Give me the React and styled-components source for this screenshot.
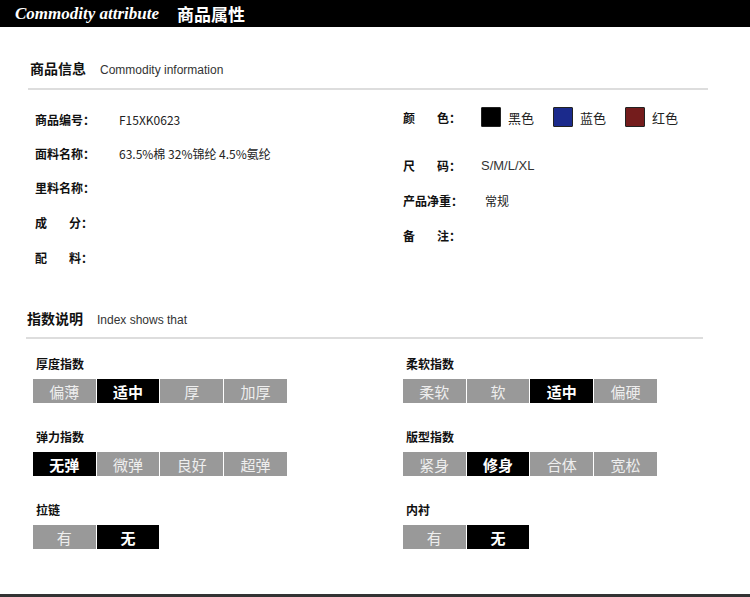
import React from "react";
import styled, { createGlobalStyle } from "styled-components";

const G = createGlobalStyle`
  body { margin: 0; background: #fff; font-family: "Liberation Sans", "Noto Sans CJK SC", sans-serif; }
`;
const Page = styled.div`width: 750px; height: 597px; overflow: hidden; border-bottom: 3px solid #333; box-sizing: border-box;`;
const Header = styled.div`height: 27px; background: #000; display: flex; align-items: center; padding-left: 15px; gap: 18px; color: #fff;`;
const Eng = styled.span`font-family: "Liberation Serif", serif; font-style: italic; font-weight: bold; font-size: 17px;`;
const Cn = styled.span`font-size: 17px; font-weight: bold; font-family: "Noto Sans CJK SC", sans-serif;`;
const SecHead = styled.div`
  margin: ${p => p.$m}; width: ${p => p.$w}px; display: flex; align-items: baseline; gap: 14px;
  padding: 0 0 ${p => p.$pb}px ${p => p.$pl}px; border-bottom: 2px solid #ddd;
`;
const SecTitle = styled.span`font-size: 14px; font-weight: bold; font-family: "Noto Sans CJK SC", sans-serif; color: #111;`;
const SecSub = styled.span`font-size: 12px; color: #333;`;
const Info = styled.div`display: grid; grid-template-columns: 368px 1fr; padding: 12px 0 0 35px; height: 175px;`;
const Col = styled.div`display: flex; flex-direction: column;`;
const Row = styled.div`display: flex; align-items: center; height: ${p => p.$h}px;`;
const Label = styled.span`
  width: ${p => p.$w}px; margin-right: ${p => p.$mr}px; font-size: 12px; font-weight: bold; color: #111;
  font-family: "Noto Sans CJK SC", sans-serif; display: flex; justify-content: space-between;
`;
const Val = styled.span`font-size: 12px; color: #222; font-family: "Noto Sans CJK SC", sans-serif;`;
const Size = styled.span`font-size: 13px; color: #333; font-family: "Liberation Sans", sans-serif;`;
const Swatch = styled.span`width: 20px; height: 20px; background: ${p => p.$c}; border: 1px solid #222; box-sizing: border-box; border-radius: 1px; margin-right: 7px;`;
const SwItem = styled.span`display: flex; align-items: center; margin-right: 19px; font-size: 13px; color: #222; font-family: "Noto Sans CJK SC", sans-serif;`;
const Index = styled.div`display: grid; grid-template-columns: 370px 1fr; padding: 16px 0 0 33px; row-gap: 25px;`;
const Group = styled.div`display: flex; flex-direction: column; gap: 7px;`;
const GLabel = styled.div`font-size: 12px; font-weight: bold; font-family: "Noto Sans CJK SC", sans-serif; color: #111; padding-left: 3px;`;
const Btns = styled.div`display: flex; gap: 1px;`;
const Btn = styled.div`
  width: 62.7px; height: 24px; display: flex; align-items: center; justify-content: center;
  background: ${p => p.$on ? "#000" : "#999"}; color: ${p => p.$on ? "#fff" : "#eee"};
  font-size: 15px; font-weight: ${p => p.$on ? "bold" : "normal"}; font-family: "Noto Sans CJK SC", sans-serif;
`;

const groups = [
  ["厚度指数", ["偏薄", "适中", "厚", "加厚"], 1],
  ["柔软指数", ["柔软", "软", "适中", "偏硬"], 2],
  ["弹力指数", ["无弹", "微弹", "良好", "超弹"], 0],
  ["版型指数", ["紧身", "修身", "合体", "宽松"], 1],
  ["拉链", ["有", "无"], 1],
  ["内衬", ["有", "无"], 1],
];

const L = ({ a, b, w = 84, mr = 0 }) => <Label $w={w} $mr={mr}><span>{a}</span><span>{b}</span></Label>;

export default function App() {
  return (
    <Page>
      <G />
      <Header><Eng>Commodity attribute</Eng><Cn>商品属性</Cn></Header>
      <SecHead $m="31px 0 0 28px" $w={678} $pl={2} $pb={10}><SecTitle>商品信息</SecTitle><SecSub>Commodity information</SecSub></SecHead>
      <Info>
        <Col>
          <Row $h={34}><L a="商品编号：" /><Val>F15XK0623</Val></Row>
          <Row $h={34}><L a="面料名称：" /><Val>63.5%棉 32%锦纶 4.5%氨纶</Val></Row>
          <Row $h={35}><L a="里料名称：" /></Row>
          <Row $h={35}><L a="成" b="分：" w={58} /></Row>
          <Row $h={35}><L a="配" b="料：" w={58} /></Row>
        </Col>
        <Col>
          <Row $h={30}><L a="颜" b="色：" w={58} mr={20} />
            <SwItem><Swatch $c="#000" />黑色</SwItem>
            <SwItem><Swatch $c="#1b2a8c" />蓝色</SwItem>
            <SwItem><Swatch $c="#741c1c" />红色</SwItem>
          </Row>
          <Row $h={66}><L a="尺" b="码：" w={58} mr={20} /><Size>S/M/L/XL</Size></Row>
          <Row $h={5}><L a="产品净重：" w={82} mr={0} /><Val>常规</Val></Row>
          <Row $h={65}><L a="备" b="注：" w={58} /></Row>
        </Col>
      </Info>
      <SecHead $m="31px 0 0 26px" $w={676} $pl={1} $pb={9}><SecTitle>指数说明</SecTitle><SecSub>Index shows that</SecSub></SecHead>
      <Index>
        {groups.map(([n, items, on]) => (
          <Group key={n}>
            <GLabel>{n}</GLabel>
            <Btns>{items.map((t, i) => <Btn key={t} $on={i === on}>{t}</Btn>)}</Btns>
          </Group>
        ))}
      </Index>
    </Page>
  );
}
